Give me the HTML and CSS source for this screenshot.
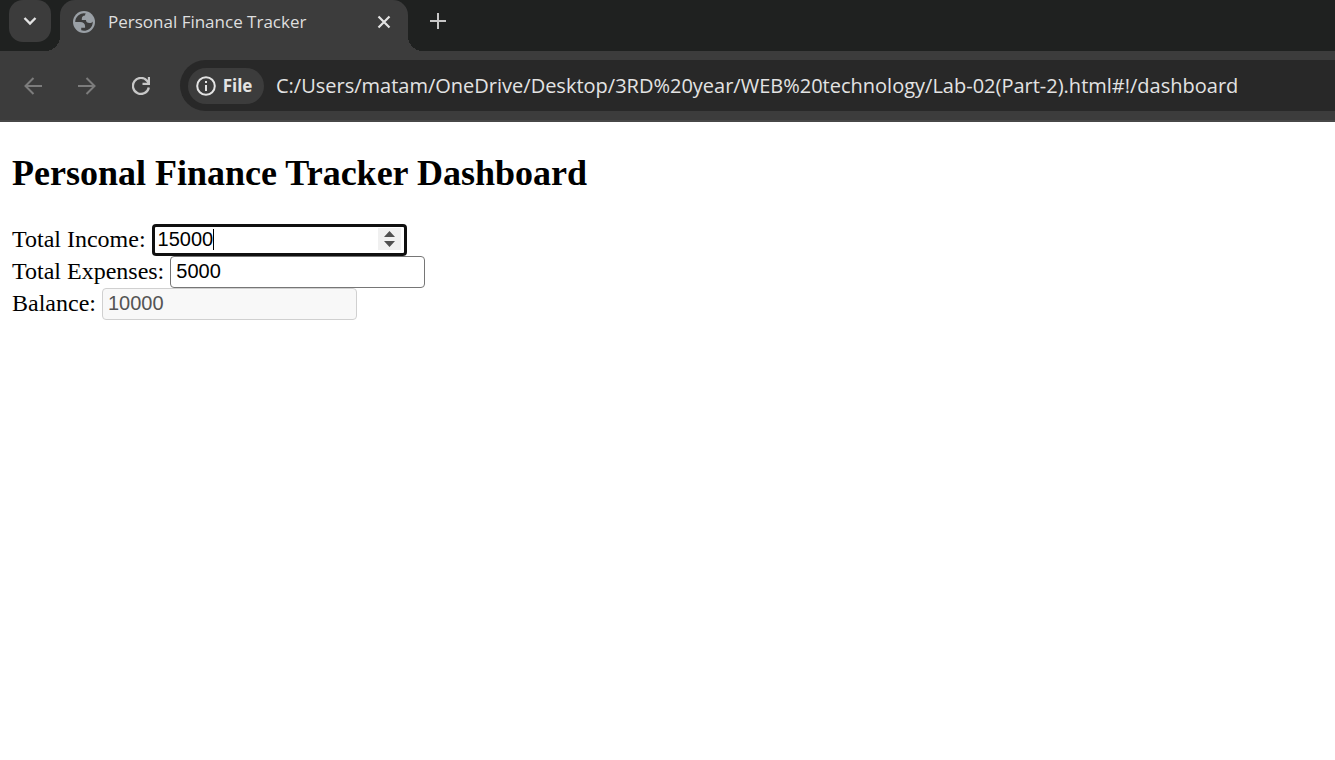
FILE: index.html
```html
<!DOCTYPE html>
<html lang="en">
<head>
<meta charset="utf-8">
<title>Personal Finance Tracker</title>
<link rel="stylesheet" href="styles.css">
</head>
<body>
<header class="browser">
  <div class="tab-strip">
    <button class="tab-search" aria-label="Search tabs">
      <svg width="14" height="10" viewBox="0 0 14 10" fill="none" stroke="#e3e3e3" stroke-width="2.4"><path d="M1.5 2 7 7.500 12.500 2"/></svg>
    </button>
    <div class="tab">
      <svg class="favicon" viewBox="2 2 20 20"><circle cx="12" cy="12" r="10" fill="#9aa0a6"/><path fill="#3c3c3c" d="M4 12h4.400c3.407.022 4.922 1.730 4.543 5.127H9.488v2.470a8.004 8.004 0 0 0 10.498-8.083C19.327 12.504 18.332 13 17 13c-2.137 0-3.206-.916-3.206-2.750h-3.748c-.274-2.728.683-4.092 2.870-4.092 0-.975.327-1.597.811-1.970A8.004 8.004 0 0 0 4 12z"/></svg>
      <span class="tab-title">Personal Finance Tracker</span>
      <button class="tab-close" aria-label="Close tab">
        <svg width="14" height="14" viewBox="0 0 14 14" stroke="#e3e3e3" stroke-width="2.200"><path d="M1.500 1.500l11 11M12.500 1.500l-11 11"/></svg>
      </button>
    </div>
    <button class="new-tab" aria-label="New tab">
      <svg width="16" height="16" viewBox="0 0 16 16" stroke="#c7c7c7" stroke-width="2"><path d="M8 0v16M0 8h16"/></svg>
    </button>
  </div>
  <nav class="toolbar">
    <button class="nav-button" aria-label="Back" disabled>
      <svg width="18" height="18" viewBox="0 0 18 18" fill="none" stroke="#7c7c7c" stroke-width="2"><path d="M18 9H1.500M9.500 1 1.500 9l8 8"/></svg>
    </button>
    <button class="nav-button" aria-label="Forward" disabled>
      <svg width="18" height="18" viewBox="0 0 18 18" fill="none" stroke="#7c7c7c" stroke-width="2"><path d="M0 9h16.500M8.500 1l8 8-8 8"/></svg>
    </button>
    <button class="nav-button" aria-label="Reload">
      <svg width="18" height="18" viewBox="0 0 18 18" fill="none" stroke="#c7c7c7" stroke-width="2.300"><path d="M16.800 10.500A8 8 0 1 1 15 3.700L17 6M17 0v6.800h-6.500"/></svg>
    </button>
    <div class="address">
      <button class="file-chip">
        <svg width="20" height="20" viewBox="0 0 20 20" fill="none" stroke="#e3e3e3" stroke-width="2"><circle cx="10" cy="10" r="8.800"/><path d="M10 9v6M10 5v2"/></svg>
        File
      </button>
      <input class="url" type="text" aria-label="Address" value="C:/Users/matam/OneDrive/Desktop/3RD%20year/WEB%20technology/Lab-02(Part-2).html#!/dashboard">
    </div>
  </nav>
</header>
<main class="page">
  <h2 class="heading">Personal Finance Tracker Dashboard</h2>
  <div class="row">
    <label for="income">Total Income:</label>
    <span class="active-field">
      <input class="field field-active" id="income" type="number" value="15000">
      <span class="caret"></span>
      <svg class="spinner" viewBox="0 0 23 22"><path fill="#f0f0f0" d="M0 0h23v22H0z"/><path fill="#505050" d="M6 9l5.500-6L17 9zM6 13h11l-5.500 6z"/></svg>
    </span>
  </div>
  <div class="row">
    <label for="expenses">Total Expenses:</label>
    <input class="field" id="expenses" type="number" value="5000">
  </div>
  <div class="row">
    <label for="balance">Balance:</label>
    <input class="field" id="balance" type="number" value="10000" disabled>
  </div>
</main>
</body>
</html>
```
FILE: styles.css
```css
* { box-sizing: border-box; }

body {
  margin: 0;
  background: #fff;
  color: #000;
  font-family: "Liberation Serif", "Times New Roman", serif;
  font-size: 24px;
}

button {
  display: flex;
  align-items: center;
  justify-content: center;
  margin: 0;
  padding: 0;
  border: 0;
  background: none;
}

.browser {
  background: #3c3c3c;
  border-bottom: 2px solid #474747;
  font-family: "Open Sans", "Noto Sans", sans-serif;
}

.tab-strip {
  display: flex;
  height: 51px;
  background: #1f2120;
}

.tab-search {
  width: 42px;
  height: 42px;
  margin-left: 9px;
  border-radius: 14px;
  background: #3c3c3c;
}

.tab {
  position: relative;
  display: flex;
  align-items: center;
  width: 348px;
  margin-left: 9px;
  padding: 0 14px 8px 13px;
  border-radius: 15px 15px 0 0;
  background: #3c3c3c;
}

.tab::before,
.tab::after {
  content: "";
  position: absolute;
  bottom: 0;
  width: 15px;
  height: 15px;
}

.tab::before {
  right: 100%;
  background: radial-gradient(circle at 0 0, transparent 15px, #3c3c3c 15px);
}

.tab::after {
  left: 100%;
  background: radial-gradient(circle at 100% 0, transparent 15px, #3c3c3c 15px);
}

.favicon {
  width: 22px;
  height: 22px;
}

.tab-title {
  flex: 1;
  margin-left: 13px;
  color: #dfdfdf;
  font-size: 17px;
  white-space: nowrap;
}

.tab-close {
  width: 20px;
  height: 20px;
}

.new-tab {
  width: 32px;
  height: 42px;
  margin-left: 14px;
}

.toolbar {
  display: flex;
  align-items: center;
  gap: 22px;
  padding: 9px 0 9px 17px;
}

.nav-button {
  width: 32px;
  height: 32px;
}

.address {
  flex: 1;
  display: flex;
  align-items: center;
  min-width: 0;
  height: 51px;
  margin-left: 1px;
  padding-left: 8px;
  border-radius: 26px 0 0 26px;
  background: #282828;
}

.file-chip {
  gap: 7px;
  width: 76px;
  height: 36px;
  padding-right: 4px;
  border-radius: 18px;
  background: #3c3c3c;
  color: #e3e3e3;
  font: 700 17px "Open Sans", sans-serif;
}

.url {
  flex: 1;
  min-width: 0;
  margin-left: 12px;
  padding: 0;
  border: 0;
  outline: 0;
  background: none;
  color: #e3e3e3;
  font: 20px "Open Sans", "Noto Sans", sans-serif;
}

.page { padding: 30px 12px; }

.heading {
  margin: 0 0 30px;
  font-size: 36px;
  line-height: 42px;
}

.row {
  display: flex;
  align-items: center;
  gap: 6px;
  height: 32px;
}

.row label { padding-bottom: 2px; }

.active-field {
  position: relative;
  display: flex;
}

.field {
  width: 255px;
  height: 32px;
  margin: 0;
  padding: 0 5px 2px;
  border: 1px solid #767676;
  border-radius: 4px;
  background: #fff;
  color: #000;
  font: 20px "Liberation Sans", Arial, sans-serif;
  appearance: textfield;
}

.field::-webkit-inner-spin-button { display: none; }

.field:disabled {
  border-color: #d0d0d0;
  background: #f8f8f8;
  color: #545454;
}

.field-active {
  padding: 0 3px 2px;
  border: 3px solid #101010;
}

.caret {
  position: absolute;
  top: 5px;
  left: 61px;
  width: 1px;
  height: 21px;
  background: #000;
}

.spinner {
  position: absolute;
  top: 4px;
  right: 6px;
  width: 23px;
  height: 22px;
}
```
